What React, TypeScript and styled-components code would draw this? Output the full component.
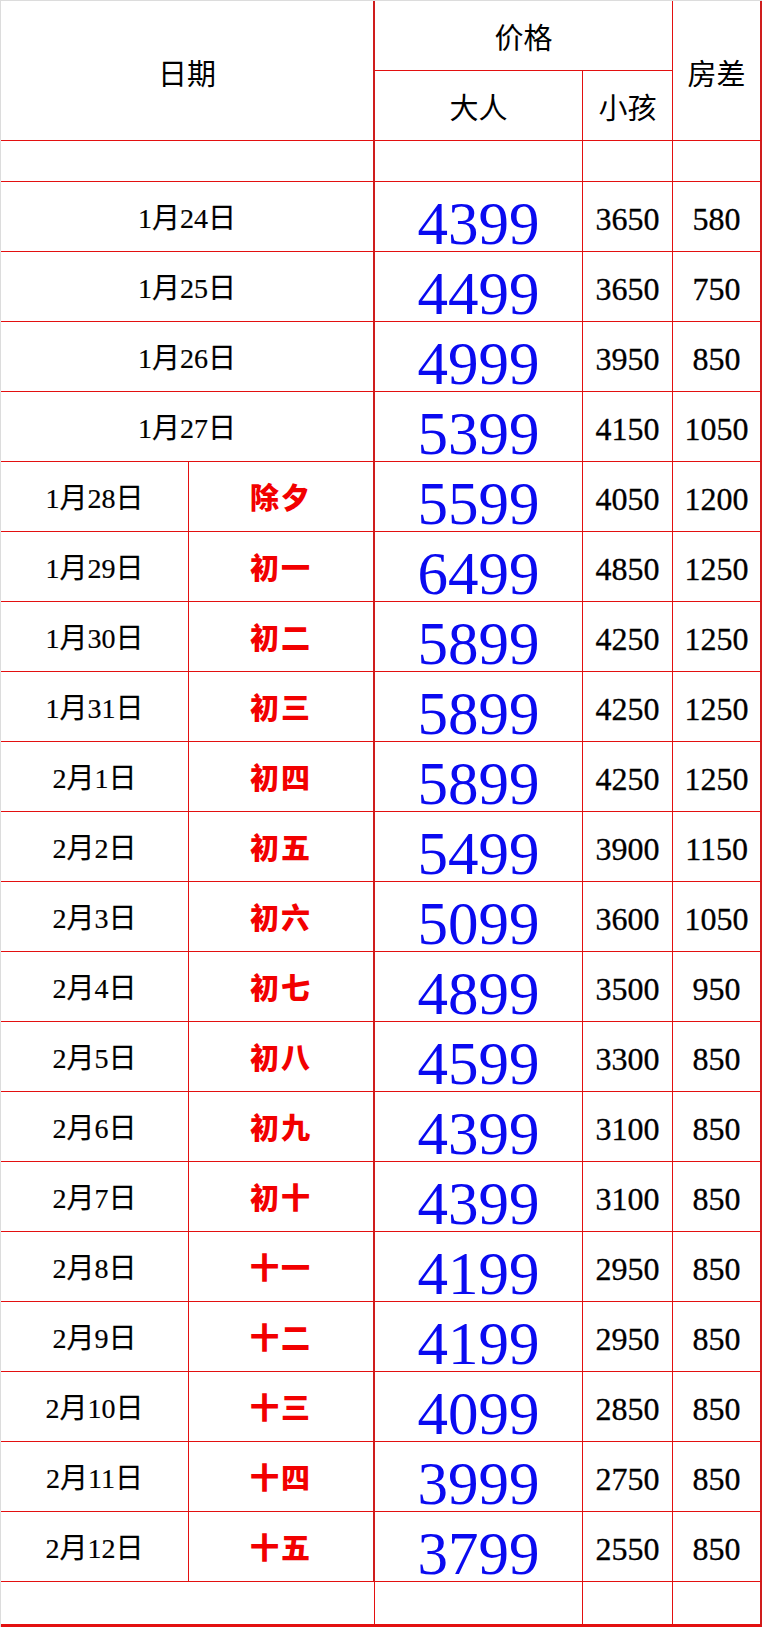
import styled, {createGlobalStyle} from 'styled-components'

const LINE = '#e31010'
const THICK_LINE = '#cf1d1d'

const GlobalStyle = createGlobalStyle`
	body {
		margin: 0;
		background: #fff;
	}
`

const Sheet = styled.div`
	width: 762px;
	border-top: 1px solid #dcdcdc;
	border-left: 1px solid #dcdcdc;
	box-sizing: border-box;
`

const Table = styled.table`
	width: 761px;
	table-layout: fixed;
	border-collapse: separate;
	border-spacing: 0;
	font-family: "Liberation Serif", "Noto Sans CJK SC", serif;
	color: #000;
`

const Row = styled.tr<{$h: number}>`
	height: ${p => p.$h}px;
`

interface IEdge {
	$right?: number
	$bottom?: number
}

const Cell = styled.td<IEdge>`
	box-sizing: border-box;
	padding: 0;
	text-align: center;
	vertical-align: middle;
	border-right: ${p => p.$right ?? 1}px solid ${p => (p.$right === 2 ? THICK_LINE : LINE)};
	border-bottom: ${p => p.$bottom ?? 1}px solid ${LINE};
`

const HeadCell = styled(Cell).attrs({as: 'th'})`
	font-family: "Noto Sans CJK SC", sans-serif;
	font-size: 29px;
	font-weight: 400;
	line-height: 1;
	padding-top: ${p => (p.rowSpan ? 3 : 1)}px;
`

const DateCell = styled(Cell)`
	font-size: 28px;
	line-height: 30px;
	padding-top: 4px;
	-webkit-text-stroke: 0.2px #000;
`

const HolidayCell = styled(Cell)`
	font-family: "Noto Sans CJK SC", sans-serif;
	font-weight: 900;
	font-size: 29px;
	line-height: 1;
	color: #f20000;
	letter-spacing: 2px;
`

const AdultCell = styled(Cell)`
	font-size: 61px;
	line-height: 44px;
	padding-top: 14px;
	color: #0a0af0;
`

const SmallCell = styled(Cell)`
	font-size: 32px;
	line-height: 30px;
	padding-top: 4px;
	-webkit-text-stroke: 0.3px #000;
`

interface IPrice {
	date: string
	holiday?: string
	adult: number
	child: number
	diff: number
}

const prices: IPrice[] = [
	{date: '1月24日', adult: 4399, child: 3650, diff: 580},
	{date: '1月25日', adult: 4499, child: 3650, diff: 750},
	{date: '1月26日', adult: 4999, child: 3950, diff: 850},
	{date: '1月27日', adult: 5399, child: 4150, diff: 1050},
	{date: '1月28日', holiday: '除夕', adult: 5599, child: 4050, diff: 1200},
	{date: '1月29日', holiday: '初一', adult: 6499, child: 4850, diff: 1250},
	{date: '1月30日', holiday: '初二', adult: 5899, child: 4250, diff: 1250},
	{date: '1月31日', holiday: '初三', adult: 5899, child: 4250, diff: 1250},
	{date: '2月1日', holiday: '初四', adult: 5899, child: 4250, diff: 1250},
	{date: '2月2日', holiday: '初五', adult: 5499, child: 3900, diff: 1150},
	{date: '2月3日', holiday: '初六', adult: 5099, child: 3600, diff: 1050},
	{date: '2月4日', holiday: '初七', adult: 4899, child: 3500, diff: 950},
	{date: '2月5日', holiday: '初八', adult: 4599, child: 3300, diff: 850},
	{date: '2月6日', holiday: '初九', adult: 4399, child: 3100, diff: 850},
	{date: '2月7日', holiday: '初十', adult: 4399, child: 3100, diff: 850},
	{date: '2月8日', holiday: '十一', adult: 4199, child: 2950, diff: 850},
	{date: '2月9日', holiday: '十二', adult: 4199, child: 2950, diff: 850},
	{date: '2月10日', holiday: '十三', adult: 4099, child: 2850, diff: 850},
	{date: '2月11日', holiday: '十四', adult: 3999, child: 2750, diff: 850},
	{date: '2月12日', holiday: '十五', adult: 3799, child: 2550, diff: 850},
]

export default function App(): JSX.Element {
	return (
		<Sheet>
			<GlobalStyle />
			<Table>
				<colgroup>
					<col style={{width: 188}} />
					<col style={{width: 186}} />
					<col style={{width: 208}} />
					<col style={{width: 90}} />
					<col style={{width: 89}} />
				</colgroup>
				<thead>
					<Row $h={70}>
						<HeadCell colSpan={2} rowSpan={2} $right={2}>日期</HeadCell>
						<HeadCell colSpan={2}>价格</HeadCell>
						<HeadCell rowSpan={2} $right={2}>房差</HeadCell>
					</Row>
					<Row $h={70}>
						<HeadCell>大人</HeadCell>
						<HeadCell>小孩</HeadCell>
					</Row>
				</thead>
				<tbody>
					<Row $h={41}>
						<Cell colSpan={2} $right={2} />
						<Cell />
						<Cell />
						<Cell $right={2} />
					</Row>
					{prices.map(p => (
						<Row $h={70} key={p.date}>
							{p.holiday ? (
								<>
									<DateCell>{p.date}</DateCell>
									<HolidayCell $right={2}>{p.holiday}</HolidayCell>
								</>
							) : (
								<DateCell colSpan={2} $right={2}>{p.date}</DateCell>
							)}
							<AdultCell>{p.adult}</AdultCell>
							<SmallCell>{p.child}</SmallCell>
							<SmallCell $right={2}>{p.diff}</SmallCell>
						</Row>
					))}
					<Row $h={45}>
						<Cell colSpan={2} $bottom={3} $right={1} />
						<Cell $bottom={3} />
						<Cell $bottom={3} />
						<Cell $bottom={3} $right={2} />
					</Row>
				</tbody>
			</Table>
		</Sheet>
	)
}
